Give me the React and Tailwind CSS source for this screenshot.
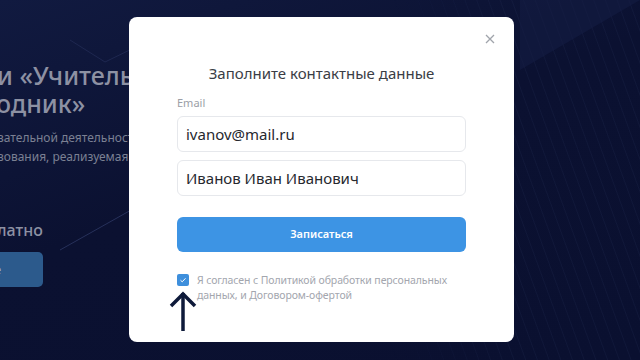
import React from "react";

export default function App() {
  const font = { fontFamily: '"Noto Sans", "Open Sans", sans-serif' };
  return (
    <div
      className="relative w-[640px] h-[360px] overflow-hidden bg-[#0b1131]"
      style={font}
    >
      {/* background page */}
      <div className="absolute inset-0 bg-[linear-gradient(160deg,#111a40_0%,#0b1131_45%,#0a1030_100%)]" />
      <div className="absolute inset-0 bg-[repeating-linear-gradient(70deg,transparent_0px,transparent_9px,rgba(120,140,200,0.06)_10px,transparent_11px)] [mask-image:linear-gradient(90deg,transparent_60%,black_80%)]" />
      <svg className="absolute inset-0" width="640" height="360">
        <line x1="60" y1="250" x2="140" y2="205" stroke="#26305a" strokeWidth="1" />
        <line x1="70" y1="40" x2="105" y2="62" stroke="#1e2750" strokeWidth="1" />
        <line x1="105" y1="62" x2="140" y2="45" stroke="#1e2750" strokeWidth="1" />
        <polygon points="520,70 640,0 640,0 520,0" fill="#141c42" opacity="0.6" />
      </svg>
      <div className="relative w-[129px] h-[360px] overflow-hidden">
        <div className="flex flex-col pt-[61px] -ml-[3px]">
          <div className="text-[25px] leading-[28px] font-medium text-[#8d91a3] whitespace-nowrap">
            и «Учитель-
          </div>
          <div className="text-[25px] leading-[28px] font-medium text-[#8d91a3] whitespace-nowrap -ml-[1px]">
            одник»
          </div>
          <div className="mt-[11px] text-[12px] leading-[19px] text-[#7b8093] whitespace-nowrap">
            вательной деятельност
          </div>
          <div className="text-[12px] leading-[19px] text-[#7b8093] whitespace-nowrap">
            вования, реализуемая п
          </div>
          <div className="mt-[54px] text-[16px] leading-[20px] font-medium text-[#8d91a3] whitespace-nowrap">
            латно
          </div>
          <div className="mt-[12px] w-[50px] h-[35px] rounded-[5px] bg-[#2c5a8c] flex items-center text-[13px] text-[#9fb4cc] -ml-[4px]">
            <span className="pl-[1px]">е</span>
          </div>
        </div>
      </div>

      {/* modal */}
      <div className="absolute left-[129px] top-[17px] w-[385px] h-[325px] rounded-[8px] bg-white">
        <div className="absolute left-[355px] top-[16px] text-[#9a9ea6]">
          <svg width="12" height="12" viewBox="0 0 12 12">
            <path d="M2 2 L10 10 M10 2 L2 10" stroke="#a0a4ab" strokeWidth="1.3" />
          </svg>
        </div>
        <div className="flex flex-col px-[48px] pt-[46px]">
          <div className="text-center text-[15px] leading-[20px] text-[#3a3d45]">
            Заполните контактные данные
          </div>
          <div className="mt-[13px] text-[11px] leading-[14px] text-[#9b9ea6]">Email</div>
          <div className="mt-[6px] h-[36px] rounded-[6px] border border-[#e6e8ec] flex items-center px-[8px] text-[15px] text-[#26282e]">
            ivanov@mail.ru
          </div>
          <div className="mt-[8px] h-[36px] rounded-[6px] border border-[#e6e8ec] flex items-center px-[8px] text-[15px] text-[#26282e]">
            Иванов Иван Иванович
          </div>
          <div className="mt-[21px] h-[35px] rounded-[6px] bg-[#3d94e4] flex items-center justify-center text-[11px] font-semibold text-white">
            Записаться
          </div>
          <div className="mt-[21px] flex gap-[8px]">
            <div className="mt-[1px] w-[12px] h-[12px] rounded-[2px] bg-[#3e8fdc] flex items-center justify-center shrink-0">
              <svg width="8" height="8" viewBox="0 0 8 8">
                <path d="M1.5 4.2 L3.2 5.8 L6.5 2.3" stroke="white" strokeWidth="1" fill="none" />
              </svg>
            </div>
            <div className="text-[10.5px] leading-[15px] tracking-[-0.1px] text-[#a3a6ae]">
              Я согласен с Политикой обработки персональных
              <br />
              данных, и Договором-офертой
            </div>
          </div>
        </div>
        <svg className="absolute left-[40px] top-[274px]" width="30" height="42" viewBox="0 0 30 42">
          <path d="M14 2 L14 40" stroke="#0e1a3a" strokeWidth="3.5" />
          <path d="M2 15 L14 3 L26 15" stroke="#0e1a3a" strokeWidth="3.5" fill="none" />
        </svg>
      </div>
    </div>
  );
}
